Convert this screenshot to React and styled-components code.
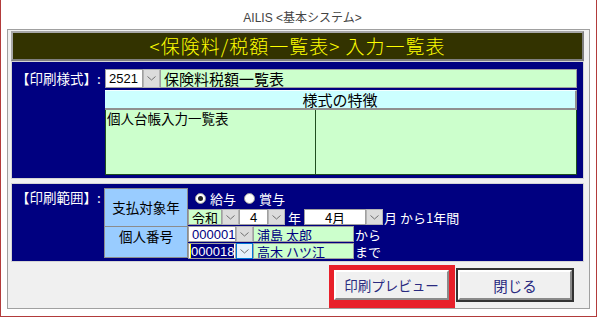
import React from 'react'
import styled, { createGlobalStyle } from 'styled-components'

const GlobalStyle = createGlobalStyle`
    body {
        margin: 0;
        background: #fff;
        font-family: "Noto Sans CJK JP", "Liberation Sans", sans-serif;
    }
    * {
        box-sizing: border-box;
    }
`

const Window = styled.div`
    width: 597px;
    height: 317px;
    border: 1px solid #b23b3b;
    border-top: none;
    background: #fff;
    display: flex;
    flex-direction: column;
`

const TitleBar = styled.div`
    height: 29px;
    padding: 4px 0 0 8px;
    display: flex;
    align-items: center;
    justify-content: center;
    font-family: "Liberation Sans", "Noto Sans CJK JP", sans-serif;
    font-size: 12px;
    color: #444;
`

const Client = styled.div`
    flex: 1;
    margin: 0 6px 7px;
    padding: 1px 5px 0 3px;
    border: 1px solid #a0a0a0;
    background: #f0f0f0;
    display: flex;
    flex-direction: column;
`

const Heading = styled.div`
    height: 30px;
    border: 2px solid;
    border-color: #a8a8a8 #808080 #808080 #a8a8a8;
    background: #333300;
    color: #ffff00;
    font-size: 19px;
    font-weight: 300;
    line-height: 26px;
    text-align: center;
    letter-spacing: 1px;
`

const Panel = styled.div`
    height: ${p => p.$height}px;
    margin-top: ${p => p.$gap || 0}px;
    border: 1px solid #d4d4d4;
    background: #000080;
    display: grid;
    grid-template-columns: ${p => p.$label}px 1fr;
    padding: ${p => p.$pad};
`

const Label = styled.div`
    padding-left: 4px;
    color: #fff;
    font-size: 13.5px;
    line-height: 19px;
    white-space: nowrap;
`

const Column = styled.div`
    display: flex;
    flex-direction: column;
`

const Row = styled.div`
    display: flex;
    align-items: center;
    height: ${p => p.$height}px;
    margin-bottom: ${p => p.$gap || 0}px;
`

const Field = styled.div`
    width: ${p => (p.$width ? `${p.$width}px` : 'auto')};
    flex: ${p => (p.$width ? 'none' : 1)};
    height: 100%;
    margin-left: ${p => p.$left || 0}px;
    border: 1px solid #a0a0a0;
    background: ${p => (p.$green ? '#ccffcc' : '#fff')};
    color: ${p => p.$color || '#000'};
    font-family: ${p => (p.$mono ? '"Liberation Sans", sans-serif' : 'inherit')};
    font-size: ${p => p.$size || 13}px;
    line-height: 1;
    display: flex;
    align-items: center;
    justify-content: ${p => (p.$center ? 'center' : 'flex-start')};
    padding: 0 ${p => (p.$pad ?? 3)}px;
    white-space: nowrap;
    overflow: hidden;
`

const Selected = styled.span`
    background: #000080;
    color: #fff;
    padding: 1px 0;
    border-left: 1px solid #ffff00;
`

const DropButton = styled.div`
    width: 17px;
    height: 100%;
    flex: none;
    border: 1px solid ${p => (p.$focused ? '#0078d7' : '#b4b4b4')};
    background: ${p => (p.$focused ? '#e5f1fb' : '#dcdcdc')};
    display: flex;
    align-items: center;
    justify-content: center;
`

const Chevron = () => (
    <svg width='9' height='5' viewBox='0 0 9 5'>
        <polyline points='0.5,0.5 4.5,4 8.5,0.5' fill='none' stroke='#707070' strokeWidth='1' />
    </svg>
)

const Drop = ({ focused }) => (
    <DropButton $focused={focused}>
        <Chevron />
    </DropButton>
)

const Header = styled.div`
    height: 20px;
    margin-top: 2px;
    background: #ccffff;
    border-top: 1px solid #f4ffff;
    border-right: 2px solid #909090;
    border-bottom: 2px solid #909090;
    text-align: center;
    font-size: 15px;
    line-height: 17px;
    color: #000;
`

const Body = styled.div`
    height: 65px;
    display: grid;
    grid-template-columns: 210px 1fr;
    background: #ccffcc;
    border: 1px solid #1f4f1f;
    border-top: none;
`

const Cell = styled.div`
    font-size: 13.5px;
    line-height: 17px;
    padding-left: 1px;
    border-right: ${p => (p.$divider ? '1px solid #1f4f1f' : 'none')};
`

const Range = styled.div`
    display: grid;
    grid-template-columns: 84px 1fr;
`

const TagBox = styled.div`
    height: 70px;
    background: #99ccff;
    border: 1px solid #8c8c8c;
    display: grid;
    grid-template-rows: 37px 1fr;
`

const Tag = styled.div`
    display: flex;
    justify-content: center;
    align-items: ${p => (p.$top ? 'flex-start' : 'center')};
    padding-top: ${p => (p.$top ? 2 : 0)}px;
    border-top: ${p => (p.$top ? '1px solid #8c8c8c' : 'none')};
    font-size: 13.5px;
    line-height: 15px;
    color: #000;
`

const Text = styled.span`
    color: #fff;
    font-size: 13px;
    line-height: 1;
    margin-left: ${p => p.$left || 0}px;
    white-space: nowrap;
`

const Radio = styled.span`
    width: 11px;
    height: 11px;
    margin-left: ${p => p.$left || 0}px;
    margin-right: 4px;
    border: 1px solid #9a9a9a;
    border-radius: 50%;
    background: #fff;
    display: inline-flex;
    align-items: center;
    justify-content: center;

    &::after {
        content: '';
        width: 5px;
        height: 5px;
        border-radius: 50%;
        background: ${p => (p.$checked ? '#222' : 'transparent')};
    }
`

const Buttons = styled.div`
    flex: 1;
    display: flex;
    align-items: flex-start;
    justify-content: flex-end;
    padding: 3px 12px 0 0;
    gap: 3px;
`

const Highlight = styled.div`
    border: solid #e8202a;
    border-width: 5px 6px 8px 5px;
`

const Button = styled.div`
    width: ${p => p.$width}px;
    height: ${p => p.$height}px;
    margin-top: ${p => p.$top || 0}px;
    background: #f0f0f0;
    border: 2px solid;
    border-color: #ffffff #8a8a8a #8a8a8a #ffffff;
    outline: ${p => (p.$default ? '2px solid #333' : 'none')};
    outline-offset: 0;
    display: flex;
    align-items: center;
    justify-content: center;
    font-size: ${p => p.$size}px;
    color: #2a2a80;
`

const App = () => (
    <Window>
        <GlobalStyle />
        <TitleBar>AILIS &lt;基本システム&gt;</TitleBar>
        <Client>
            <Heading>&lt;保険料/税額一覧表&gt; 入力一覧表</Heading>

            <Panel $height={118} $label={93} $pad='7px 6px 0 0'>
                <Label>【印刷様式】:</Label>
                <Column>
                    <Row $height={19}>
                        <Field $width={38} $mono $size={13}>2521</Field>
                        <Drop />
                        <Field $green $size={15}>保険料税額一覧表</Field>
                    </Row>
                    <Header>様式の特徴</Header>
                    <Body>
                        <Cell $divider>個人台帳入力一覧表</Cell>
                        <Cell />
                    </Body>
                </Column>
            </Panel>

            <Panel $height={79} $gap={4} $label={92} $pad='4px 0 0 0'>
                <Label>【印刷範囲】:</Label>
                <Range>
                    <TagBox>
                        <Tag>支払対象年</Tag>
                        <Tag $top>個人番号</Tag>
                    </TagBox>
                    <Column>
                        <Row $height={21}>
                            <Radio $checked $left={7} />
                            <Text>給与</Text>
                            <Radio $left={8} />
                            <Text>賞与</Text>
                        </Row>
                        <Row $height={16} $gap={1}>
                            <Field $width={34} $green>令和</Field>
                            <Drop />
                            <Field $width={29} $mono $center>4</Field>
                            <Drop />
                            <Text $left={3}>年</Text>
                            <Field $width={62} $center $left={3}>4月</Field>
                            <Drop />
                            <Text $left={1}>月 から1年間</Text>
                        </Row>
                        <Row $height={16} $gap={1}>
                            <Field $width={48} $mono $color='#000080'>000001</Field>
                            <Drop />
                            <Field $width={101} $green $color='#000080'>浦島 太郎</Field>
                            <Text $left={1}>から</Text>
                        </Row>
                        <Row $height={16}>
                            <Field $width={48} $mono $pad={1}>
                                <Selected>000018</Selected>
                            </Field>
                            <Drop focused />
                            <Field $width={101} $green $color='#000080'>高木 ハツ江</Field>
                            <Text $left={1}>まで</Text>
                        </Row>
                    </Column>
                </Range>
            </Panel>

            <Buttons>
                <Highlight>
                    <Button $width={115} $height={30} $size={13.5}>印刷プレビュー</Button>
                </Highlight>
                <Button $width={114} $height={30} $top={5} $size={14.5} $default>閉じる</Button>
            </Buttons>
        </Client>
    </Window>
)

export default App
